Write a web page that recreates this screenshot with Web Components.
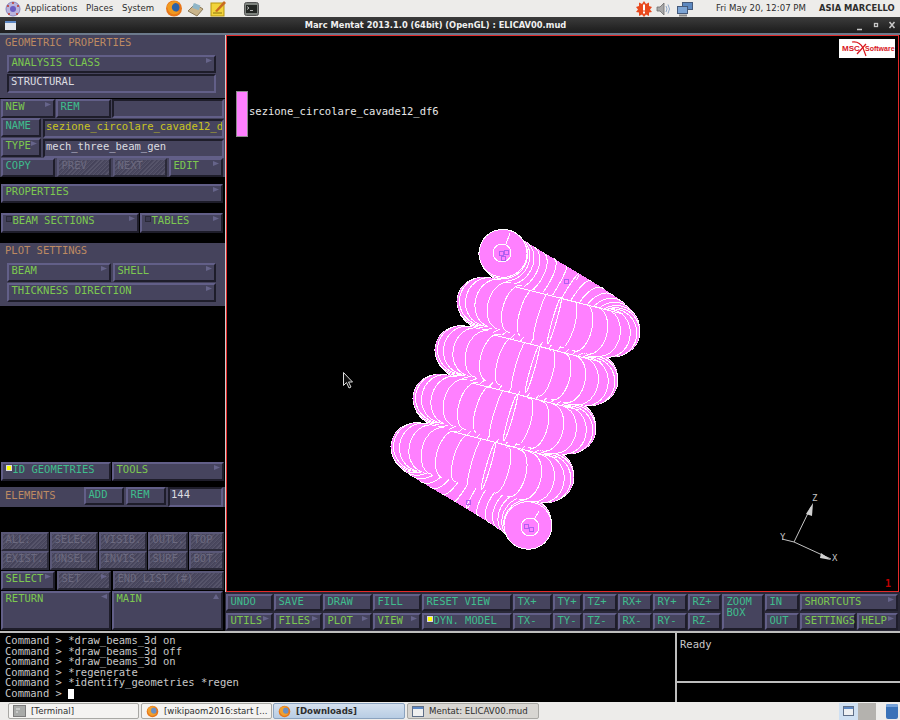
<!DOCTYPE html>
<html>
<head>
<meta charset="utf-8">
<title>Marc Mentat</title>
<style>
	html, body { margin: 0; padding: 0; background: #000; }
	body { width: 900px; height: 720px; overflow: hidden; display: flex; flex-direction: column; }
	.work { display: flex; height: 596px; }
	.right { display: flex; flex-direction: column; width: 675px; }
</style>
</head>
<body>
<os-panel></os-panel>
<os-titlebar>Marc Mentat 2013.1.0 (64bit) (OpenGL) : ELICAV00.mud</os-titlebar>
<div class="work">
	<mt-side></mt-side>
	<div class="right">
		<mt-view></mt-view>
		<mt-tools></mt-tools>
	</div>
</div>
<mt-console></mt-console>
<os-taskbar></os-taskbar>

<script>
const MONO = '"DejaVu Sans Mono", "Liberation Mono", monospace';
const UI = '"DejaVu Sans", "Liberation Sans", sans-serif';

// Motif style push button, popup flag and led are optional
class MtBtn extends HTMLElement {
	constructor() {
		super();
		this.attachShadow({ mode: 'open' });
		const arrow = this.getAttribute('arrow');
		const led = this.hasAttribute('led');
		let flag = '';
		if (arrow === 'right') flag = '<polygon points="0,0 6,2.5 0,5" />';
		if (arrow === 'left') flag = '<polygon points="6,0 0,2.5 6,5" />';
		if (arrow === 'up') flag = '<polygon points="3,0 6,5 0,5" />';
		this.shadowRoot.innerHTML = `
			<style>
				:host {
					display: block;
					box-sizing: border-box;
					position: relative;
					min-width: 0;
					border: 2px solid;
					border-color: #625f88 #1e1d2a #1e1d2a #625f88;
					background: #46445e;
					color: #3fbd8d;
					font: 10.5px/10.5px ${MONO};
					white-space: nowrap;
					overflow: hidden;
				}
				:host([tone=green]) { color: #7cc850; }
				:host([tone=teal]) { color: #3fbd8d; }
				:host([off]) {
					color: #6c6a80;
					border-color: #5a5878 #2a2938 #2a2938 #5a5878;
					background: repeating-linear-gradient(135deg, #4b4960 0 1px, #56546a 1px 2px, #45435a 2px 3px);
				}
				.in { display: flex; align-items: flex-start; padding: 0 0 0 2.5px; }
				.led {
					box-sizing: border-box;
					flex: none;
					width: 6px;
					height: 6px;
					margin: 1px 1px 0 0;
					background: #3a3950;
					border: 1px solid #2a2938;
				}
				:host([led=on]) .led { background: #ffff00; border-color: #d8d8e0; }
				svg { position: absolute; right: 2px; top: 1px; fill: #66648a; }
			</style>
			<div class="in">${led ? '<span class="led"></span>' : ''}<span><slot></slot></span></div>
			${flag ? `<svg width="6" height="5" viewBox="0 0 6 5">${flag}</svg>` : ''}
		`;
	}
}
customElements.define('mt-btn', MtBtn);

// Sunken text field
class MtField extends HTMLElement {
	constructor() {
		super();
		this.attachShadow({ mode: 'open' });
		this.shadowRoot.innerHTML = `
			<style>
				:host {
					display: block;
					box-sizing: border-box;
					min-width: 0;
					border: 2px solid;
					border-color: #1e1d2a #625f88 #625f88 #1e1d2a;
					background: #46445e;
					color: #dcdce0;
					font: 10.5px/11px ${MONO};
					white-space: nowrap;
					overflow: hidden;
					padding-left: 1px;
				}
				:host([tone=yellow]) { color: #c9c51f; }
			</style>
			<slot></slot>
		`;
	}
}
customElements.define('mt-field', MtField);

class MtSide extends HTMLElement {
	constructor() {
		super();
		this.attachShadow({ mode: 'open' });
		this.shadowRoot.innerHTML = `
			<style>
				:host {
					display: flex;
					flex-direction: column;
					flex: none;
					width: 225px;
					height: 596px;
					background: #000;
					overflow: hidden;
					font: 10.5px/14px ${MONO};
				}
				.sec { background: #45435c; }
				.ttl { height: 20px; color: #bd8a62; padding-left: 5px; white-space: nowrap; }
				.inset { padding: 0 9px 0 7px; height: 63px; box-sizing: border-box; }
				.stack { display: grid; row-gap: 1px; }
				.row { display: grid; padding-left: 1px; width: 224px; box-sizing: border-box; }
				.row > *, .stack > * { height: 100%; }
			</style>
			<div class="sec inset">
				<div class="ttl" style="padding-left:0;margin-left:-2px">GEOMETRIC PROPERTIES</div>
				<div class="stack" style="grid-template-rows:18px 19px">
					<mt-btn tone="green" arrow="right">ANALYSIS CLASS</mt-btn>
					<mt-field style="padding-left:2px">STRUCTURAL</mt-field>
				</div>
			</div>
			<div class="sec" style="margin-top:1px;height:78px">
				<div class="row" style="height:19px;grid-template-columns:54px 55px 112px;column-gap:1px">
					<mt-btn tone="green" arrow="right">NEW</mt-btn>
					<mt-btn>REM</mt-btn>
					<mt-field></mt-field>
				</div>
				<div class="row" style="height:20px;grid-template-columns:40px 181px;column-gap:2px">
					<mt-btn style="height:19px">NAME</mt-btn>
					<mt-field tone="yellow" style="margin-top:1px;height:19px">sezione_circolare_cavade12_d</mt-field>
				</div>
				<div class="row" style="height:20px;grid-template-columns:40px 181px;column-gap:2px">
					<mt-btn tone="green" arrow="right" style="height:19px">TYPE</mt-btn>
					<mt-field style="margin-top:1px;height:19px">mech_three_beam_gen</mt-field>
				</div>
				<div class="row" style="height:19px;grid-template-columns:54px 54px 54px 54px;column-gap:2px">
					<mt-btn>COPY</mt-btn>
					<mt-btn off>PREV</mt-btn>
					<mt-btn off>NEXT</mt-btn>
					<mt-btn tone="green" arrow="right">EDIT</mt-btn>
				</div>
			</div>
			<div class="row" style="margin-top:7px;height:19px;grid-template-columns:222px">
				<mt-btn tone="green" arrow="right">PROPERTIES</mt-btn>
			</div>
			<div class="row" style="margin-top:10px;height:20px;grid-template-columns:138px 83px;column-gap:1px">
				<mt-btn tone="green" arrow="right" led>BEAM SECTIONS</mt-btn>
				<mt-btn tone="green" arrow="right" led>TABLES</mt-btn>
			</div>
			<div class="sec inset" style="margin-top:10px">
				<div class="ttl" style="padding-left:0;margin-left:-2px">PLOT SETTINGS</div>
				<div style="display:grid;grid-template-columns:104px 103px;column-gap:2px;height:19px">
					<mt-btn tone="green" arrow="right">BEAM</mt-btn>
					<mt-btn tone="green" arrow="right">SHELL</mt-btn>
				</div>
				<mt-btn tone="green" arrow="right" style="margin-top:1px;height:19px;width:209px">THICKNESS DIRECTION</mt-btn>
			</div>
			<div class="row" style="margin-top:156px;height:19px;grid-template-columns:110px 112px;column-gap:1px">
				<mt-btn led="on">ID GEOMETRIES</mt-btn>
				<mt-btn tone="green" arrow="right">TOOLS</mt-btn>
			</div>
			<div class="sec" style="margin-top:6px;height:20px;display:grid;grid-template-columns:82px 40px 40px 55px;column-gap:2px;width:225px">
				<div class="ttl" style="line-height:16px">ELEMENTS</div>
				<mt-btn style="height:18px">ADD</mt-btn>
				<mt-btn style="height:18px">REM</mt-btn>
				<mt-field>144</mt-field>
			</div>
			<div class="row" style="margin-top:25px;height:19px;grid-template-columns:48px 48px 48px 40px 35px;column-gap:1px">
				<mt-btn off>ALL:</mt-btn><mt-btn off>SELEC.</mt-btn><mt-btn off>VISIB.</mt-btn><mt-btn off>OUTL.</mt-btn><mt-btn off>TOP</mt-btn>
			</div>
			<div class="row" style="height:19px;grid-template-columns:48px 48px 48px 40px 35px;column-gap:1px">
				<mt-btn off>EXIST.</mt-btn><mt-btn off>UNSEL.</mt-btn><mt-btn off>INVIS.</mt-btn><mt-btn off>SURF.</mt-btn><mt-btn off>BOT.</mt-btn>
			</div>
			<div class="row" style="margin-top:1px;height:19px;grid-template-columns:54px 54px 111px;column-gap:2px">
				<mt-btn tone="green" arrow="right">SELECT</mt-btn>
				<mt-btn off arrow="right">SET</mt-btn>
				<mt-btn off>END LIST (#)</mt-btn>
			</div>
			<div class="row" style="margin-top:1px;height:39px;grid-template-columns:110px 111px;column-gap:1px">
				<mt-btn tone="green" arrow="left">RETURN</mt-btn>
				<mt-btn tone="green" arrow="up">MAIN</mt-btn>
			</div>
		`;
	}
}
customElements.define('mt-side', MtSide);

// Coil drawn from a real helix: tube segments and section discs painted back to front
class MtSpring extends HTMLElement {
	constructor() {
		super();
		this.attachShadow({ mode: 'open' });
		const O = [575, 256, 0], A = [-22, 48.5, -6], U = [62, 27, 0], W = [-1, 2, 66];
		const R = 24, N = 60;
		const at = t => {
			const k = t / (2 * Math.PI);
			return [0, 1, 2].map(j => O[j] + A[j] * k + U[j] * Math.cos(t) + W[j] * Math.sin(t));
		};
		const discs = [];
		for (let i = 0; i <= N * 9; i++) {
			const t = Math.PI + i * Math.PI / N;
			const p = at(t);
			const d = [0, 1, 2].map(j => A[j] / (2 * Math.PI) - U[j] * Math.sin(t) + W[j] * Math.cos(t));
			const len = Math.hypot(d[0], d[1], d[2]);
			discs.push({ p, next: i < N * 9 ? at(t + Math.PI / N) : null, d: d.map(v => v / len), ring: i % 4 === 0 });
		}
		discs.sort((a, b) => a.p[2] - b.p[2]);
		const shapes = discs.map(({ p, next, d, ring }) => {
			const rx = Math.max(0.6, R * Math.abs(d[2])).toFixed(2);
			const deg = (Math.atan2(d[1], d[0]) * 180 / Math.PI).toFixed(2);
			const x = p[0].toFixed(1), y = p[1].toFixed(1);
			let quad = '';
			if (next) {
				const dx = next[0] - p[0], dy = next[1] - p[1], l = Math.hypot(dx, dy) || 1;
				const nx = -dy / l * R, ny = dx / l * R;
				quad = `<path d="M${(p[0] + nx).toFixed(1)} ${(p[1] + ny).toFixed(1)}L${(next[0] + nx).toFixed(1)} ${(next[1] + ny).toFixed(1)}L${(next[0] - nx).toFixed(1)} ${(next[1] - ny).toFixed(1)}L${(p[0] - nx).toFixed(1)} ${(p[1] - ny).toFixed(1)}Z"/>`;
			}
			return `${quad}<ellipse cx="${x}" cy="${y}" rx="${rx}" ry="${R}" transform="rotate(${deg} ${x} ${y})"${ring ? ' class="r"' : ''}/>`;
		}).join('');
		let edges = '';
		for (let k = 0; k < 4; k++) {
			edges += `<line class="cap" x1="${515 - 22 * k}" y1="${287 + 48 * k}" x2="${622 - 22 * k}" y2="${314 + 48 * k}"/>`;
		}
		this.shadowRoot.innerHTML = `
			<style>
				:host { display: contents; }
				svg { position: absolute; left: -1px; top: -1px; width: 675px; height: 557px; shape-rendering: crispEdges; }
				path, ellipse { fill: #ff80ff; }
				ellipse.r { stroke: #fff; stroke-width: 1; }
				.cap { fill: none; stroke: #fff; stroke-width: 1; }
				.node { fill: none; stroke: #b060f0; stroke-width: 1; }
			</style>
			<svg viewBox="225 35 675 557">
				${shapes}
				${edges}
				<circle class="cap" cx="501" cy="253" r="9"/>
				<line class="cap" x1="509" y1="233" x2="505" y2="244"/>
				<rect class="node" x="498" y="251" width="4" height="4"/>
				<rect class="node" x="503" y="250" width="4" height="4"/>
				<rect class="node" x="500" y="256" width="4" height="4"/>
				<rect class="node" x="563" y="279" width="4" height="4"/>
				<circle class="cap" cx="529" cy="527" r="9"/>
				<line class="cap" x1="538" y1="511" x2="533" y2="520"/>
				<rect class="node" x="523" y="524" width="4" height="4"/>
				<rect class="node" x="528" y="527" width="4" height="4"/>
				<rect class="node" x="465" y="500" width="4" height="4"/>
			</svg>
		`;
	}
}
customElements.define('mt-spring', MtSpring);

class MtView extends HTMLElement {
	constructor() {
		super();
		this.attachShadow({ mode: 'open' });
		this.shadowRoot.innerHTML = `
			<style>
				:host {
					display: block;
					position: relative;
					box-sizing: border-box;
					height: 557px;
					width: 673px;
					margin-left: 1px;
					border: 1px solid #e22a2a;
					box-shadow: -1px 0 0 #cfcfcf;
					background: #000;
					overflow: hidden;
					font: 10.5px/12px ${MONO};
					color: #e8e8e8;
				}
				.key { position: absolute; left: 9px; top: 55px; display: flex; align-items: flex-start; gap: 1px; }
				.key span { margin-top: 14px; }
				.swatch { width: 10px; height: 44px; background: #ff80ff; border: 1px solid #8c8c8c; }
				.logo {
					position: absolute; right: 3px; top: 3px;
					width: 56px; height: 19px;
					background: #fff;
					color: #d8141c;
					font: bold 7px/19px "Liberation Sans", sans-serif;
				}
				.logo b { position: absolute; top: 0; }
				.logo svg { position: absolute; left: 0; top: 0; }
				.num { position: absolute; right: 7px; bottom: 1px; color: #c00000; font: bold 10px/12px ${MONO}; }
				.triad { position: absolute; left: 0; top: 0; }
				.triad text { font: 9px ${MONO}; fill: #c4c4c4; }
			</style>
			<div class="key"><div class="swatch"></div><span>sezione_circolare_cavade12_df6</span></div>
			<div class="logo">
				<b style="left:3px;font-size:8px">MSC</b>
				<svg width="56" height="19" viewBox="0 0 56 19">
					<path d="M13 3 C19 2 22 5 24 9 L27 17" fill="none" stroke="#d8141c" stroke-width="1.2"/>
					<path d="M27 5 L18 15" fill="none" stroke="#d8141c" stroke-width="1.2"/>
				</svg>
				<b style="left:26px">Software</b>
			</div>
			<mt-spring></mt-spring>
			<svg class="triad" width="673" height="555" viewBox="226 36 673 555">
				<g stroke="#c4c4c4" stroke-width="1" fill="none">
					<line x1="793" y1="542" x2="810" y2="507"/>
					<line x1="793" y1="542" x2="830" y2="559"/>
					<line x1="793" y1="542" x2="781" y2="539"/>
				</g>
				<polygon points="812,503 805,514 811,516" fill="#d0d0d0"/>
				<polygon points="830,560 820,553 819,558" fill="#d0d0d0"/>
				<text x="811" y="501">Z</text>
				<text x="831" y="561">X</text>
				<text x="779" y="540">Y</text>
				<path d="M342.5 372.5 v13 l3-3 2.5 5.5 2-1 -2.5-5 h4 z" fill="#111" stroke="#ddd" stroke-width="1"/>
			</svg>
			<div class="num">1</div>
		`;
	}
}
customElements.define('mt-view', MtView);

class MtTools extends HTMLElement {
	constructor() {
		super();
		this.attachShadow({ mode: 'open' });
		this.shadowRoot.innerHTML = `
			<style>
				:host {
					display: grid;
					box-sizing: border-box;
					height: 39px;
					padding: 2px 0 0 1px;
					background: #292837;
					grid-template-columns: 47px 48px 49px 48px 90px 39px 29px 34px 34px 34px 33px 42px 34px 56px 41px;
					grid-template-rows: 17px 17px;
					gap: 2px 1px;
				}
			</style>
			<mt-btn>UNDO</mt-btn><mt-btn>SAVE</mt-btn><mt-btn>DRAW</mt-btn><mt-btn>FILL</mt-btn><mt-btn>RESET VIEW</mt-btn>
			<mt-btn>TX+</mt-btn><mt-btn>TY+</mt-btn><mt-btn>TZ+</mt-btn><mt-btn>RX+</mt-btn><mt-btn>RY+</mt-btn><mt-btn>RZ+</mt-btn>
			<mt-btn style="grid-row:span 2">ZOOM<br>BOX</mt-btn>
			<mt-btn>IN</mt-btn>
			<mt-btn tone="green" arrow="right" style="grid-column:span 2">SHORTCUTS</mt-btn>
			<mt-btn tone="green" arrow="right">UTILS</mt-btn><mt-btn tone="green" arrow="right">FILES</mt-btn><mt-btn tone="green" arrow="right">PLOT</mt-btn><mt-btn tone="green" arrow="right">VIEW</mt-btn>
			<mt-btn led="on">DYN. MODEL</mt-btn>
			<mt-btn>TX-</mt-btn><mt-btn>TY-</mt-btn><mt-btn>TZ-</mt-btn><mt-btn>RX-</mt-btn><mt-btn>RY-</mt-btn><mt-btn>RZ-</mt-btn>
			<mt-btn>OUT</mt-btn>
			<mt-btn tone="green" style="overflow:visible">SETTINGS</mt-btn>
			<mt-btn tone="green" arrow="right">HELP</mt-btn>
		`;
	}
}
customElements.define('mt-tools', MtTools);

class MtConsole extends HTMLElement {
	constructor() {
		super();
		this.attachShadow({ mode: 'open' });
		this.shadowRoot.innerHTML = `
			<style>
				:host {
					display: grid;
					box-sizing: border-box;
					height: 71px;
					border-top: 2px solid #bdbdbd;
					background: #000;
					color: #c8c8c8;
					grid-template-columns: 675px 1fr;
					font: 10.5px/10.6px ${MONO};
				}
				.log { padding: 2px 0 0 5px; white-space: pre; }
				.cur { display: inline-block; width: 6px; height: 10px; background: #fff; vertical-align: -2px; }
				.rt { border-left: 2px solid #bdbdbd; display: grid; grid-template-rows: 48px 2px 1fr; }
				.ready { padding: 6px 0 0 3px; }
				.sep { background: #bdbdbd; }
			</style>
			<div class="log">Command &gt; *draw_beams_3d on
Command &gt; *draw_beams_3d off
Command &gt; *draw_beams_3d on
Command &gt; *regenerate
Command &gt; *identify_geometries *regen
Command &gt; <span class="cur"></span></div>
			<div class="rt"><div class="ready">Ready</div><div class="sep"></div><div></div></div>
		`;
	}
}
customElements.define('mt-console', MtConsole);

class OsPanel extends HTMLElement {
	constructor() {
		super();
		this.attachShadow({ mode: 'open' });
		this.shadowRoot.innerHTML = `
			<style>
				:host {
					display: flex;
					box-sizing: border-box;
					flex: none;
					height: 17px;
					align-items: center;
					background: #edecea;
					color: #2e2e2e;
					font: 8.6px/17px ${UI};
					white-space: nowrap;
				}
				svg { flex: none; display: block; }
				b { font-weight: bold; font-size: 8.4px; }
			</style>
			<svg style="margin-left:5px" width="16" height="16" viewBox="0 0 16 16">
				<circle cx="8" cy="8" r="7" fill="#b9b4dc" stroke="#8a86c0"/>
				<circle cx="8" cy="8" r="3" fill="#6a5cc0"/>
				<g fill="#c0392b"><circle cx="3" cy="5" r="1"/><circle cx="13" cy="5" r="1"/><circle cx="8" cy="2" r="1"/><circle cx="4" cy="13" r="1"/><circle cx="12" cy="13" r="1"/></g>
			</svg>
			<span style="margin-left:4px;width:61px">Applications</span>
			<span style="width:36px">Places</span>
			<span style="width:43px">System</span>
			<svg width="18" height="17" viewBox="0 0 18 17">
				<circle cx="9" cy="8.5" r="8" fill="#e8761a"/>
				<circle cx="10" cy="7.5" r="4.5" fill="#2c62a8"/>
				<path d="M2 6 C4 1 11 0 15 3 C11 2 8 3 7 6 C6 10 10 13 15 11 C12 16 3 16 2 6Z" fill="#f09a20"/>
			</svg>
			<svg style="margin-left:4px" width="17" height="16" viewBox="0 0 17 16">
				<path d="M1 10 L8 3 L16 8 L10 15 Z" fill="#c9b48a" stroke="#8c7a58"/>
				<rect x="6" y="3" width="7" height="5" fill="#8fb6c8" transform="rotate(20 9 5)"/>
			</svg>
			<svg style="margin-left:6px" width="17" height="17" viewBox="0 0 17 17">
				<rect x="1" y="3" width="13" height="13" fill="#f2d43c" stroke="#b8950f"/>
				<path d="M5 11 L14 1 L16 3 L7 12 Z" fill="#c96a20"/>
				<path d="M3 13 h9" stroke="#8a7410"/>
			</svg>
			<svg style="margin-left:17px" width="15" height="14" viewBox="0 0 15 14">
				<rect x="0.5" y="0.5" width="14" height="13" rx="2" fill="#7d827d" stroke="#555"/>
				<rect x="2" y="3" width="11" height="8" fill="#232623"/>
				<path d="M3 4.5 l2 1.5 -2 1.5 M6 8.5 h3" stroke="#d8d8d8" fill="none" stroke-width="0.8"/>
			</svg>
			<svg style="margin-left:377px" width="16" height="16" viewBox="0 0 16 16">
				<polygon points="8,0 10,3 13,1.5 13,5 16,6 14,8.5 16,11 13,11.5 13,15 10,13.5 8,16 6,13.5 3,15 3,11.5 0,11 2,8.5 0,6 3,5 3,1.5 6,3" fill="#e8481c"/>
				<rect x="7" y="3.5" width="2" height="6" fill="#fff"/><rect x="7" y="10.5" width="2" height="2" fill="#fff"/>
			</svg>
			<svg style="margin-left:4px" width="14" height="14" viewBox="0 0 14 14">
				<path d="M1 5 h3 l4-4 v12 l-4-4 h-3 z" fill="#a8a8a8" stroke="#6c6c6c" stroke-width="0.8"/>
				<path d="M10 4 q2 3 0 6 M12 2.5 q3 4.5 0 9" fill="none" stroke="#8fa8c8"/>
			</svg>
			<svg style="margin-left:7px" width="16" height="16" viewBox="0 0 16 16">
				<rect x="5.5" y="1.5" width="10" height="7" fill="#5c88c0" stroke="#44597a"/>
				<rect x="0.5" y="5.5" width="10" height="7" fill="#7ca4d4" stroke="#44597a"/>
				<path d="M2 14.5 h8" stroke="#888" stroke-width="2"/>
			</svg>
			<span style="margin-left:23px;width:103px">Fri May 20, 12:07 PM</span>
			<b>ASIA MARCELLO</b>
		`;
	}
}
customElements.define('os-panel', OsPanel);

class OsTitlebar extends HTMLElement {
	constructor() {
		super();
		this.attachShadow({ mode: 'open' });
		this.shadowRoot.innerHTML = `
			<style>
				:host {
					display: block;
					position: relative;
					box-sizing: border-box;
					flex: none;
					height: 18px;
					padding-right: 29px;
					background: linear-gradient(#3c3c3c, #232323 75%, #1f1f1f);
					border-bottom: 2px solid #6c7a8c;
					color: #f0f0f0;
					font: bold 8.3px/16px ${UI};
					text-align: center;
				}
				svg { position: absolute; top: 0; }
			</style>
			<svg style="left:5px;top:4px" width="11" height="9" viewBox="0 0 11 9">
				<rect width="11" height="9" fill="#e4e8ee"/><rect width="11" height="2" fill="#5d88c4"/>
			</svg>
			<slot></slot>
			<svg style="right:0;top:3px" width="44" height="11" viewBox="0 0 44 11" stroke="#c8c8c8" fill="none">
				<path d="M1 9.5 h5" stroke-width="1.5"/>
				<rect x="18.5" y="3.5" width="3" height="3" stroke-width="1.3"/>
				<path d="M33.5 2 l5 6 M38.5 2 l-5 6" stroke-width="1.5"/>
			</svg>
		`;
	}
}
customElements.define('os-titlebar', OsTitlebar);

// Task button in the bottom panel
class OsTask extends HTMLElement {
	constructor() {
		super();
		this.attachShadow({ mode: 'open' });
		this.shadowRoot.innerHTML = `
			<style>
				:host {
					display: flex;
					box-sizing: border-box;
					align-items: center;
					gap: 5px;
					height: 16px;
					padding-left: 4px;
					border: 1px solid #a8a8a4;
					border-radius: 2px;
					background: #f4f3f1;
					color: #2e2e2e;
					font: 8.6px/14px ${UI};
					white-space: nowrap;
					overflow: hidden;
				}
				:host([active]) { background: linear-gradient(#d4e0ee, #b8cde4); font-weight: bold; border-color: #8ba3bf; }
				:host([plain]) { background: #d8d6d2; }
				::slotted(svg) { flex: none; }
			</style>
			<slot name="icon"></slot><slot></slot>
		`;
	}
}
customElements.define('os-task', OsTask);

class OsTaskbar extends HTMLElement {
	constructor() {
		super();
		this.attachShadow({ mode: 'open' });
		const fox = `<svg slot="icon" width="13" height="13" viewBox="0 0 18 17">
			<circle cx="9" cy="8.5" r="8" fill="#e8761a"/><circle cx="10" cy="7.5" r="4.5" fill="#6a90c4"/>
			<path d="M2 6 C4 1 11 0 15 3 C11 2 8 3 7 6 C6 10 10 13 15 11 C12 16 3 16 2 6Z" fill="#f0a030"/></svg>`;
		this.shadowRoot.innerHTML = `
			<style>
				:host {
					display: flex;
					box-sizing: border-box;
					flex: none;
					height: 18px;
					padding: 1px 0 0 8px;
					background: #edecea;
					align-items: flex-start;
				}
				svg { display: block; flex: none; }
			</style>
			<os-task style="width:131px"><svg slot="icon" width="13" height="12" viewBox="0 0 13 12"><rect x="0.5" y="0.5" width="12" height="11" fill="#a8aaa8" stroke="#7c7c7c"/><path d="M3 4 h4 M3 7 h2" stroke="#e8e8e8"/></svg>[Terminal]</os-task>
			<os-task style="width:131px;margin-left:2px">${fox}[wikipaom2016:start [...</os-task>
			<os-task active style="width:132px;margin-left:1px">${fox}[Downloads]</os-task>
			<os-task plain style="width:132px;margin-left:2px"><svg slot="icon" width="12" height="11" viewBox="0 0 12 11"><rect x="0.5" y="0.5" width="11" height="10" fill="#f0f0f0" stroke="#5f6f88"/><rect x="1" y="1" width="10" height="2" fill="#5d88c4"/></svg>Mentat: ELICAV00.mud</os-task>
			<svg style="margin:0 0 0 300px" width="37" height="17" viewBox="0 0 37 17">
				<rect width="19" height="17" fill="#cfe0f2"/><rect x="19" width="18" height="17" fill="#b4b2ae"/>
				<rect x="4.5" y="3.5" width="10" height="9" fill="#eef0f2" stroke="#5f6f88"/><rect x="5" y="4" width="9" height="2" fill="#5d88c4"/>
			</svg>
			<svg style="margin-left:9px" width="14" height="17" viewBox="0 0 14 17">
				<rect x="1" y="2" width="12" height="14" rx="2" fill="#3a72b8"/><rect x="1" y="1" width="12" height="3" rx="1" fill="#76a2d8"/>
			</svg>
		`;
	}
}
customElements.define('os-taskbar', OsTaskbar);
</script>
</body>
</html>
